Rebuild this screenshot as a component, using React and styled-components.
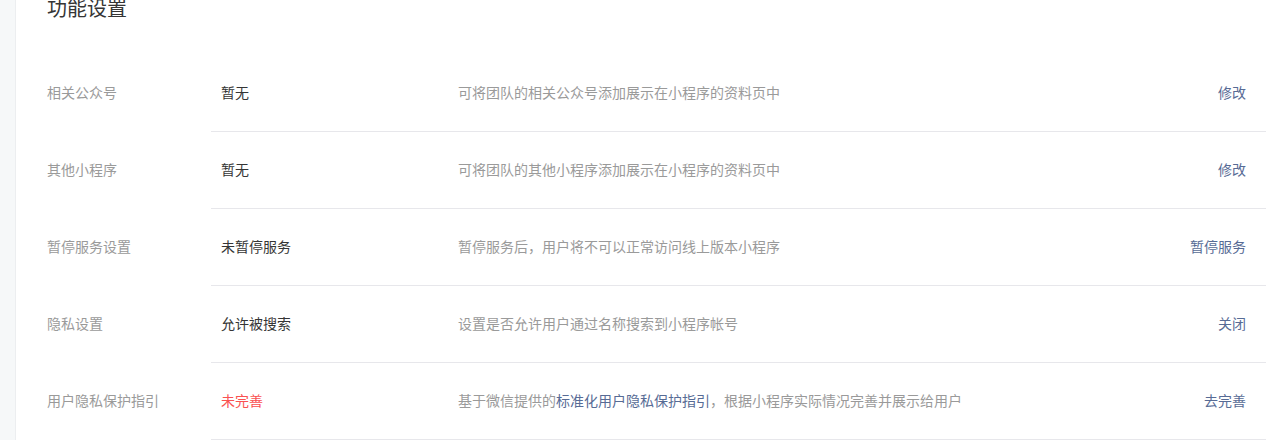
import React from 'react';
import styled, { createGlobalStyle } from 'styled-components';

const Global = createGlobalStyle`
  body {
    margin: 0;
    background: #f6f8f9;
    font-family: "Noto Sans CJK SC", "Noto Sans", sans-serif;
  }
`

const Page = styled.div`
  display: flex;
  min-height: 440px;
  padding-left: 15px;
`
const Panel = styled.div`
  flex: 1;
  background: #fff;
  border-left: 1px solid #eceef0;
  padding: 0 7px 0 31px;
`
const Title = styled.h2`
  margin: 0 0 39px;
  font-size: 20px;
  line-height: 16px;
  font-weight: 400;
  color: #353535;
`
const List = styled.div`
  display: flex;
  flex-direction: column;
`
const Row = styled.div`
  display: flex;
  font-size: 14px;
`
const Label = styled.div`
  width: 164px;
  flex-shrink: 0;
  display: flex;
  align-items: center;
  padding-bottom: 4px;
  color: #9a9a9a;
`
const Content = styled.div`
  flex: 1;
  display: flex;
  align-items: center;
  box-sizing: border-box;
  height: 77px;
  padding: 0 20px 3px 10px;
  border-bottom: 1px solid #e7e7eb;
`
const Value = styled.div`
  width: 237px;
  flex-shrink: 0;
  color: ${(p) => (p.$warn ? '#fa5151' : '#353535')};
`
const Desc = styled.div`
  flex: 1;
  color: #9a9a9a;
`
const Link = styled.span`
  color: #576b95;
`
const Action = styled.a`
  color: #576b95;
  cursor: pointer;
`

const rows = [
  { label: '相关公众号', value: '暂无', desc: '可将团队的相关公众号添加展示在小程序的资料页中', action: '修改' },
  { label: '其他小程序', value: '暂无', desc: '可将团队的其他小程序添加展示在小程序的资料页中', action: '修改' },
  { label: '暂停服务设置', value: '未暂停服务', desc: '暂停服务后，用户将不可以正常访问线上版本小程序', action: '暂停服务' },
  { label: '隐私设置', value: '允许被搜索', desc: '设置是否允许用户通过名称搜索到小程序帐号', action: '关闭' },
  {
    label: '用户隐私保护指引',
    value: '未完善',
    warn: true,
    desc: (
      <>
        基于微信提供的<Link>标准化用户隐私保护指引</Link>，根据小程序实际情况完善并展示给用户
      </>
    ),
    action: '去完善',
  },
]

export default function App() {
  return (
    <Page>
      <Global />
      <Panel>
        <Title>功能设置</Title>
        <List>
          {rows.map((r) => (
            <Row key={r.label}>
              <Label>{r.label}</Label>
              <Content>
                <Value $warn={r.warn}>{r.value}</Value>
                <Desc>{r.desc}</Desc>
                <Action>{r.action}</Action>
              </Content>
            </Row>
          ))}
        </List>
      </Panel>
    </Page>
  );
}
